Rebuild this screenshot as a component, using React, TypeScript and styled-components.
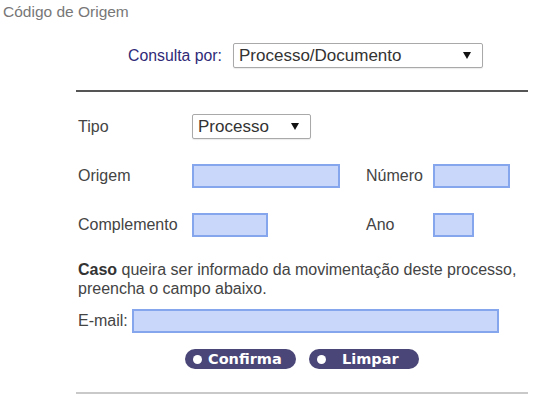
import React from "react";
import styled, { createGlobalStyle } from "styled-components";

const GlobalStyle = createGlobalStyle`
  html, body {
    margin: 0;
    padding: 0;
    background: #ffffff;
  }
  body {
    font-family: "Liberation Sans", Arial, sans-serif;
    color: #444;
  }
`;

function Select({ value, width }: { value: string; width: number }) {
  return (
    <SelectBox $width={width}>
      <span>{value}</span>
      <Arrow viewBox="0 0 8 7">
        <path d="M0 0 L8 0 L4 7 Z" fill="#111" />
      </Arrow>
    </SelectBox>
  );
}

function App() {
  return (
    <>
      <GlobalStyle />
      <Page>
        <Title>Código de Origem</Title>

        <ConsultaRow>
          <ConsultaLabel>Consulta por:</ConsultaLabel>
          <Select value="Processo/Documento" width={250} />
        </ConsultaRow>

        <Section>
          <Divider $dark />

          <FormGrid>
            <Label>Tipo</Label>
            <Cell $span={3}>
              <Select value="Processo" width={119} />
            </Cell>

            <Label>Origem</Label>
            <Cell>
              <Field $width={148} />
            </Cell>
            <Label>Número</Label>
            <Cell>
              <Field $width={77} />
            </Cell>

            <Label>Complemento</Label>
            <Cell>
              <Field $width={76} />
            </Cell>
            <Label>Ano</Label>
            <Cell>
              <Field $width={41} />
            </Cell>
          </FormGrid>

          <Notice>
            <b>Caso</b> queira ser informado da movimentação deste processo,
            <br />
            preencha o campo abaixo.
          </Notice>

          <EmailRow>
            <Label>E-mail:</Label>
            <Field $width={367} />
          </EmailRow>

          <Buttons>
            <PillButton>
              <Dot />
              Confirma
            </PillButton>
            <PillButton $wide>
              <Dot />
              Limpar
            </PillButton>
          </Buttons>

          <Divider />
        </Section>
      </Page>
    </>
  );
}

const Page = styled.div`
  width: 550px;
  height: 400px;
  overflow: hidden;
`;

const Title = styled.div`
  padding: 3px 0 0 3px;
  font-size: 15.5px;
  line-height: 18px;
  color: #777;
`;

const ConsultaRow = styled.div`
  display: flex;
  align-items: center;
  gap: 11px;
  margin-top: 22px;
  padding-left: 128px;
`;

const ConsultaLabel = styled.span`
  font-size: 15.8px;
  color: #2f2a78;
`;

const SelectBox = styled.div<{ $width: number }>`
  box-sizing: border-box;
  width: ${(p) => p.$width}px;
  height: 25px;
  display: flex;
  align-items: center;
  justify-content: space-between;
  padding: 0 11px 0 5px;
  border: 1px solid #a9a9a9;
  border-radius: 2px;
  background: #fff;
  font-size: 17px;
  color: #333;
  box-shadow: 0 1px 1px rgba(0, 0, 0, 0.08);
`;

const Arrow = styled.svg`
  width: 8px;
  height: 7px;
`;

const Section = styled.div`
  margin-left: 76px;
  width: 452px;
`;

const Divider = styled.div<{ $dark?: boolean }>`
  height: 2px;
  margin-top: ${(p) => (p.$dark ? "22px" : "23px")};
  background: ${(p) => (p.$dark ? "#555" : "#c9c9c9")};
`;

const FormGrid = styled.div`
  display: grid;
  grid-template-columns: 114px 174px 67px auto;
  grid-template-rows: 25px 24px 24px;
  row-gap: 25px;
  margin: 22px 0 0 2px;
  align-items: center;
`;

const Label = styled.span`
  font-size: 16px;
  color: #444;
`;

const Cell = styled.div<{ $span?: number }>`
  display: flex;
  align-items: center;
  grid-column: span ${(p) => p.$span ?? 1};
`;

const Field = styled.div<{ $width: number }>`
  box-sizing: border-box;
  width: ${(p) => p.$width}px;
  height: 24px;
  background: #c9d7fb;
  border: 2px solid #85a5ec;
`;

const Notice = styled.div`
  margin: 23px 0 0 2px;
  font-size: 16px;
  line-height: 19px;
  color: #444;

  b {
    color: #333;
  }
`;

const EmailRow = styled.div`
  display: flex;
  align-items: center;
  gap: 4px;
  margin: 11px 0 0 2px;
`;

const Buttons = styled.div`
  display: flex;
  justify-content: center;
  gap: 13px;
  margin-top: 16px;
`;

const PillButton = styled.button<{ $wide?: boolean }>`
  display: flex;
  align-items: center;
  gap: ${(p) => (p.$wide ? "16px" : "6px")};
  height: 20px;
  width: ${(p) => (p.$wide ? "110px" : "111px")};
  padding: 0 0 0 8px;
  border: none;
  border-radius: 10px;
  background: #4a4677;
  color: #fff;
  font-family: "DejaVu Sans", Verdana, sans-serif;
  font-weight: bold;
  font-size: 14.5px;
  cursor: pointer;
`;

const Dot = styled.span`
  width: 9px;
  height: 9px;
  border-radius: 50%;
  background: #fff;
  flex-shrink: 0;
`;

export default App;
